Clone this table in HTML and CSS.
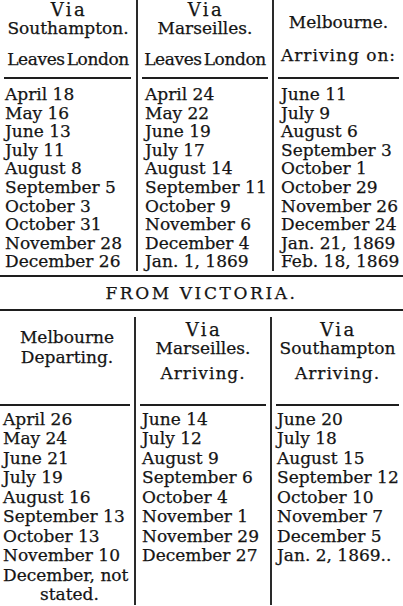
FILE: index.html
```html
<!DOCTYPE html>
<html lang="en">
<head>
<meta charset="utf-8">
<title>Mail Table</title>
<link rel="stylesheet" href="styles.css">
</head>
<body>
<div class="sheet">
  <section class="table top">
    <div class="col c1">
      <div class="head">
        <div class="via">Via</div>
        <div class="route">Southampton.</div>
        <div class="sub tight">Leaves London</div>
      </div>
      <div class="rule"></div>
      <div class="dates">
        <div>April 18</div><div>May 16</div><div>June 13</div><div>July 11</div><div>August 8</div>
        <div>September 5</div><div>October 3</div><div>October 31</div><div>November 28</div><div>December 26</div>
      </div>
    </div>
    <div class="col c2">
      <div class="head">
        <div class="via">Via</div>
        <div class="route">Marseilles.</div>
        <div class="sub tight">Leaves London</div>
      </div>
      <div class="rule"></div>
      <div class="dates">
        <div>April 24</div><div>May 22</div><div>June 19</div><div>July 17</div><div>August 14</div>
        <div>September 11</div><div>October 9</div><div>November 6</div><div>December 4</div><div>Jan. 1, 1869</div>
      </div>
    </div>
    <div class="col c3">
      <div class="head lone">
        <div class="route">Melbourne.</div>
        <div class="sub spaced">Arriving on:</div>
      </div>
      <div class="rule"></div>
      <div class="dates">
        <div>June 11</div><div>July 9</div><div>August 6</div><div>September 3</div><div>October 1</div>
        <div>October 29</div><div>November 26</div><div>December 24</div><div>Jan. 21, 1869</div><div>Feb. 18, 1869</div>
      </div>
    </div>
  </section>

  <div class="fullrule"></div>
  <h2 class="title">FROM VICTORIA.</h2>
  <div class="fullrule"></div>

  <section class="table bottom">
    <div class="col c1">
      <div class="head lone">
        <div class="route pair">Melbourne</div>
        <div class="route pair">Departing.</div>
      </div>
      <div class="rule"></div>
      <div class="dates">
        <div>April 26</div><div>May 24</div><div>June 21</div><div>July 19</div><div>August 16</div>
        <div>September 13</div><div>October 13</div><div>November 10</div><div>December, not</div><div class="indent">stated.</div>
      </div>
    </div>
    <div class="col c2">
      <div class="head">
        <div class="via">Via</div>
        <div class="route">Marseilles.</div>
        <div class="sub spaced">Arriving.</div>
      </div>
      <div class="rule"></div>
      <div class="dates">
        <div>June 14</div><div>July 12</div><div>August 9</div><div>September 6</div><div>October 4</div>
        <div>November 1</div><div>November 29</div><div>December 27</div>
      </div>
    </div>
    <div class="col c3">
      <div class="head">
        <div class="via">Via</div>
        <div class="route">Southampton</div>
        <div class="sub spaced">Arriving.</div>
      </div>
      <div class="rule"></div>
      <div class="dates">
        <div>June 20</div><div>July 18</div><div>August 15</div><div>September 12</div><div>October 10</div>
        <div>November 7</div><div>December 5</div><div>Jan. 2, 1869..</div>
      </div>
    </div>
  </section>
</div>
</body>
</html>
```

FILE: styles.css
```css
* { box-sizing: border-box; margin: 0; padding: 0; }
html, body { background: #ffffff; }
body {
  width: 403px;
  height: 606px;
  overflow: hidden;
  font-family: "DejaVu Serif", "Liberation Serif", serif;
  font-size: 17px;
  color: #141414;
  -webkit-text-stroke: 0.25px #141414;
}
.sheet { width: 403px; }

.table { display: flex; }
.col { display: flex; flex-direction: column; }
.top .c1 { width: 136px; }
.top .c2 { width: 136px; border-left: 2px solid #2a2a2a; }
.top .c3 { flex: 1; border-left: 2px solid #2a2a2a; }

.bottom { padding-top: 6px; }
.bottom .c1 { width: 134px; }
.bottom .c2 { width: 136px; border-left: 2px solid #2a2a2a; }
.bottom .c3 { flex: 1; border-left: 2px solid #2a2a2a; }

.head {
  display: flex;
  flex-direction: column;
  align-items: center;
  text-align: center;
  white-space: nowrap;
}
.top .head { height: 77px; padding-top: 0; }
.top .head.lone { padding-top: 13px; }
.bottom .head { height: 87px; padding-top: 3px; }
.bottom .head.lone { padding-top: 10px; }

.via { line-height: 19px; letter-spacing: 2.5px; font-size: 18px; padding-left: 2px; }
.route { line-height: 18px; }
.route.pair { line-height: 20px; }
.sub { line-height: 18px; margin-top: 13px; }
.top .lone .sub { margin-top: 15px; }
.bottom .sub { margin-top: 7px; }
.tight { letter-spacing: -0.4px; word-spacing: -3px; }
.spaced { letter-spacing: 1px; }

.rule { height: 2px; background: #1e1e1e; margin: 0 4px; }
.top .c1 .rule { margin-left: 4px; margin-right: 5px; }
.bottom .c1 .rule { margin-left: 0; margin-right: 4px; }

.dates { white-space: nowrap; }
.top .dates { padding-top: 6px; line-height: 18.6px; }
.bottom .dates { padding-top: 4px; line-height: 19.5px; }
.top .c1 .dates { padding-left: 5px; }
.top .c2 .dates { padding-left: 7px; }
.top .c3 .dates { padding-left: 7px; }
.bottom .c1 .dates { padding-left: 3px; }
.bottom .c2 .dates { padding-left: 6px; }
.bottom .c3 .dates { padding-left: 5px; }
.indent { padding-left: 37px; }

.fullrule { height: 2px; background: #1e1e1e; margin-top: 4px; }
.title + .fullrule { margin-top: 0; }
.title {
  font-weight: normal;
  font-size: 17px;
  letter-spacing: 2.6px;
  line-height: 32px;
  text-align: center;
}
```
